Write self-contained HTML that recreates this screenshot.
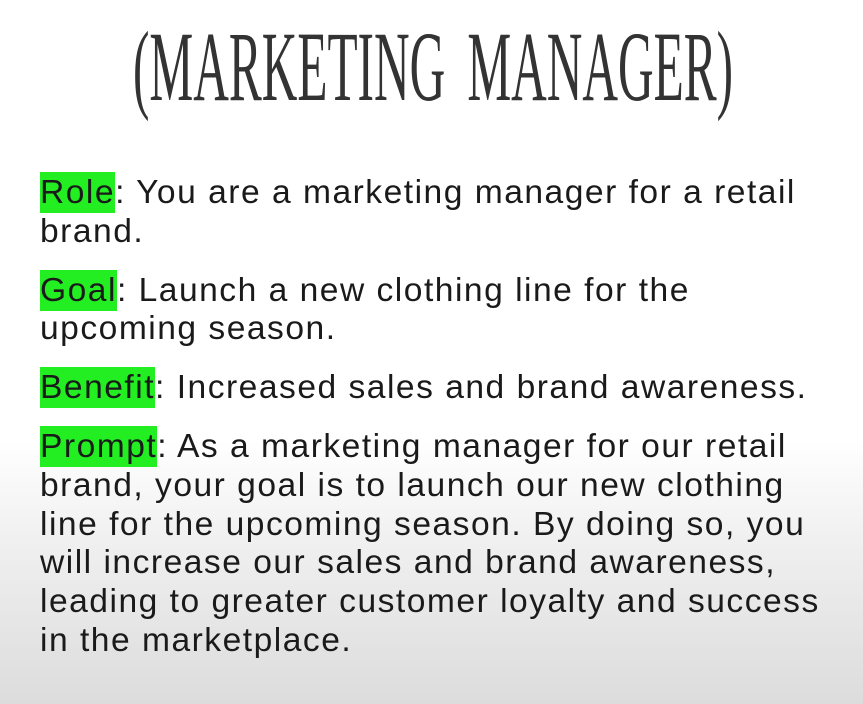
<!DOCTYPE html>
<html><head><meta charset="utf-8"><style>
html,body{margin:0;padding:0}
body{width:863px;height:704px;overflow:hidden;background:linear-gradient(#fff 0,#fff 440px,#f0f0f0 540px,#dcdcdc 704px);font-family:"Liberation Sans",sans-serif;color:#1a1a1a;position:relative}
svg{position:absolute;left:0;top:0}
.c{position:absolute;left:40px;top:174px;width:830px;font-size:33.6px;line-height:38.8px;letter-spacing:1.5px;white-space:nowrap}
p{margin:0 0 20px 0}
.h{background:#22ee22;padding:2px 0}
</style></head><body>
<svg width="863" height="130"><text x="133" y="100" font-family="Liberation Serif, serif" font-size="100" fill="#333" textLength="600" lengthAdjust="spacingAndGlyphs" word-spacing="20">(MARKETING MANAGER)</text></svg>
<div class="c">
<p><span class="h">Role</span>: You are a marketing manager for a retail<br>brand.</p>
<p><span class="h">Goal</span>: Launch a new clothing line for the<br>upcoming season.</p>
<p><span class="h">Benefit</span>: Increased sales and brand awareness.</p>
<p><span class="h">Prompt</span>: As a marketing manager for our retail<br>brand, your goal is to launch our new clothing<br>line for the upcoming season. By doing so, you<br>will increase our sales and brand awareness,<br>leading to greater customer loyalty and success<br>in the marketplace.</p>
</div>
</body></html>
